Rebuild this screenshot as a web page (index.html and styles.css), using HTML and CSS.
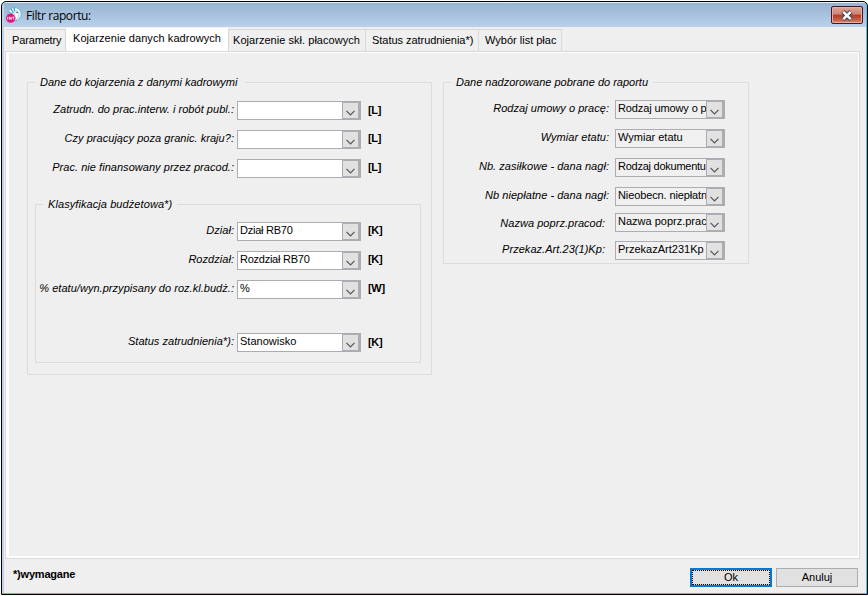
FILE: index.html
```html
<!DOCTYPE html>
<html lang="pl">
<head>
  <meta charset="utf-8">
  <title>Filtr raportu</title>
  <link rel="stylesheet" href="styles.css">
</head>
<body>
  <svg class="defs">
    <symbol id="chevron" viewBox="0 0 9 6">
      <path d="M0.5 0.8 L4.5 4.8 L8.5 0.8" fill="none" stroke="#555" stroke-width="1.2"/>
    </symbol>
  </svg>
  <div class="window">
    <div class="titlebar">
      <svg class="app-icon" viewBox="0 0 16 16">
        <circle cx="8.6" cy="7.2" r="6.7" fill="#f2fafd" stroke="#5fb9d8" stroke-width="1"/>
        <path d="M5 2 L7.5 6 M2.8 5 L6 7 M8 1 L8.6 4" stroke="#3aa3cc" stroke-width="1.3"/>
        <path d="M9 4 Q13 3 13 8 Q12 12 10 13 Q8 9 9 4" fill="#fff" stroke="#8fb4c4" stroke-width=".6"/>
        <circle cx="11" cy="5.5" r=".8" fill="#345"/>
        <circle cx="4.7" cy="11.2" r="4.6" fill="#e5127d"/>
        <path d="M1.7 9.8 V12.6 M3.4 12.6 V9.8 L5.2 12.6 V9.8 M6.2 10.2 H8.6 M7.4 10.2 V12.6" fill="none" stroke="#fff" stroke-width=".8"/>
      </svg>
      <span class="title">Filtr raportu:</span>
      <button class="close">
        <svg viewBox="0 0 14 11" width="14" height="11">
          <path d="M3 1.5 L11 9.5 M11 1.5 L3 9.5" stroke="#4b4a5c" stroke-width="4.6"/>
          <path d="M3.3 1.8 L10.7 9.2 M10.7 1.8 L3.3 9.2" stroke="#fff" stroke-width="2.4"/>
        </svg>
      </button>
    </div>

    <div class="tabs">
      <div class="tab t1"><span>Parametry</span></div>
      <div class="tab t2 active"><span>Kojarzenie danych kadrowych</span></div>
      <div class="tab t3"><span>Kojarzenie skł. płacowych</span></div>
      <div class="tab t4"><span>Status zatrudnienia*)</span></div>
      <div class="tab t5"><span>Wybór list płac</span></div>
    </div>

    <div class="panel">
      <fieldset class="group hr-data">
        <legend>Dane do kojarzenia z danymi kadrowymi</legend>
        <div class="row first"><label>Zatrudn. do prac.interw. i robót publ.:</label><div class="combo"><span></span><i><svg><use href="#chevron"/></svg></i></div><b>[L]</b></div>
        <div class="row"><label>Czy pracujący poza granic. kraju?:</label><div class="combo"><span></span><i><svg><use href="#chevron"/></svg></i></div><b>[L]</b></div>
        <div class="row"><label>Prac. nie finansowany przez pracod.:</label><div class="combo"><span></span><i><svg><use href="#chevron"/></svg></i></div><b>[L]</b></div>

        <fieldset class="group budget">
          <legend>Klasyfikacja budżetowa*)</legend>
          <div class="row"><label>Dział:</label><div class="combo"><span class="tight">Dział RB70</span><i><svg><use href="#chevron"/></svg></i></div><b>[K]</b></div>
          <div class="row"><label>Rozdział:</label><div class="combo"><span class="tight">Rozdział RB70</span><i><svg><use href="#chevron"/></svg></i></div><b>[K]</b></div>
          <div class="row"><label>% etatu/wyn.przypisany do roz.kl.budż.:</label><div class="combo"><span>%</span><i><svg><use href="#chevron"/></svg></i></div><b>[W]</b></div>
          <div class="row status"><label>Status zatrudnienia*):</label><div class="combo"><span>Stanowisko</span><i><svg><use href="#chevron"/></svg></i></div><b>[K]</b></div>
        </fieldset>
      </fieldset>

      <fieldset class="group report-data">
        <legend>Dane nadzorowane pobrane do raportu</legend>
        <div class="row"><label>Rodzaj umowy o pracę:</label><div class="combo"><span class="snug">Rodzaj umowy o p</span><i><svg><use href="#chevron"/></svg></i></div></div>
        <div class="row"><label>Wymiar etatu:</label><div class="combo"><span>Wymiar etatu</span><i><svg><use href="#chevron"/></svg></i></div></div>
        <div class="row"><label>Nb. zasiłkowe - dana nagł:</label><div class="combo"><span class="tight">Rodzaj dokumentu</span><i><svg><use href="#chevron"/></svg></i></div></div>
        <div class="row"><label>Nb niepłatne - dana nagł:</label><div class="combo"><span class="snug">Nieobecn. niepłatn</span><i><svg><use href="#chevron"/></svg></i></div></div>
        <div class="row prev"><label>Nazwa poprz.pracod:</label><div class="combo"><span>Nazwa poprz.prac</span><i><svg><use href="#chevron"/></svg></i></div></div>
        <div class="row art"><label>Przekaz.Art.23(1)Kp:</label><div class="combo"><span>PrzekazArt231Kp</span><i><svg><use href="#chevron"/></svg></i></div></div>
      </fieldset>
    </div>

    <div class="footer">
      <span class="required">*)wymagane</span>
      <button class="btn primary"><span>Ok</span></button>
      <button class="btn">Anuluj</button>
    </div>
  </div>
</body>
</html>
```
FILE: styles.css
```css
* {
  box-sizing: border-box;
}

body {
  margin: 0;
  padding: 1px 0 1px 1px;
  height: 596px;
  overflow: hidden;
  background: #fff;
  color: #000;
  font-family: "Liberation Sans", Arial, sans-serif;
  font-size: 11px;
  line-height: 14px;
}

.defs {
  display: none;
}

.window {
  display: flex;
  flex-direction: column;
  width: 867px;
  height: 594px;
  padding: 1px 1px 1px 2px;
  border: 1px solid #000;
  border-radius: 5px 5px 0 0;
  background: #efefef;
  box-shadow: inset -1px -1px #3cc5ee, inset 2px 0 #bcd3ea, inset 0 1px #e8f1fa;
}

.titlebar {
  display: flex;
  align-items: center;
  height: 24px;
  padding: 0 3px 0 2px;
  background: linear-gradient(#98b4d2, #b9d1ea);
}

.app-icon {
  width: 16px;
  height: 16px;
}

.title {
  flex: 1;
  margin: 2px 0 0 4px;
  font: 12px/16px "Open Sans", "Noto Sans", sans-serif;
  letter-spacing: -0.4px;
}

.close {
  display: flex;
  align-items: center;
  justify-content: center;
  width: 32px;
  height: 18px;
  padding: 0;
  border: 1px solid #431620;
  border-radius: 2px;
  background: linear-gradient(#dfa597, #cf8575 45%, #b63a22 50%, #c1583f 75%, #d58d78);
  box-shadow: inset 0 0 0 1px #e2b0a4;
}

.tabs {
  display: flex;
  align-items: flex-end;
  height: 24px;
  padding-left: 2px;
}

.tab {
  height: 22px;
  border-top: 1px solid #d9d9d9;
  border-right: 1px solid #d9d9d9;
  padding: 3px 0 0 5px;
  white-space: nowrap;
}

.tab.t1 {
  width: 60px;
  padding-left: 6px;
  letter-spacing: -0.15px;
}

.tab.t2 {
  width: 163px;
  letter-spacing: 0.07px;
}

.tab.t3 {
  width: 137px;
  padding-left: 4px;
  letter-spacing: 0.04px;
}

.tab.t4 {
  width: 113px;
  padding-left: 6px;
  letter-spacing: -0.04px;
}

.tab.t5 {
  width: 83px;
  padding-left: 6px;
}

.tab.active {
  height: 24px;
  margin-bottom: -1px;
  padding: 2px 0 0 7px;
  border-color: #fff #d9d9d9 #fff #fff;
  background: #fff;
}

.panel {
  display: flex;
  align-items: flex-start;
  gap: 11px;
  width: 855px;
  height: 508px;
  margin-left: 1px;
  padding: 23px 0 0 21px;
  border: 1px solid #d9d9d9;
  box-shadow: inset 3px 1px #fff, inset -1px -2px #fff;
}

.group {
  margin: 0;
  padding: 0;
  border: 1px solid #dcdcdc;
  min-width: 0;
}

legend {
  height: 14px;
  margin-left: 7px;
  padding: 0 5px;
  font-style: italic;
  white-space: nowrap;
}

.hr-data {
  width: 405px;
  height: 300px;
}

.hr-data > legend {
  padding-right: 8px;
}

.budget {
  width: 386px;
  height: 166px;
  margin: 19px 0 0 7px;
}

.budget > legend {
  padding-right: 5px;
  letter-spacing: 0.08px;
}

.report-data {
  width: 306px;
  height: 189px;
}

.row {
  display: flex;
  height: 19px;
  margin-bottom: 10px;
}

.hr-data .row:first-of-type {
  margin-top: 12px;
}

.hr-data .budget .row:first-of-type,
.report-data .row:first-of-type {
  margin-top: 11px;
}

.row label {
  width: 206px;
  margin: 1px 3px 0 0;
  font-style: italic;
  letter-spacing: 0.04px;
  text-align: right;
  white-space: nowrap;
}

.budget .row label {
  width: 198px;
}

.combo {
  display: flex;
  width: 124px;
  height: 19px;
  border: 1px solid #abadb3;
  background: #fff;
}

.combo span {
  flex: 1;
  min-width: 0;
  padding-left: 2px;
  overflow: hidden;
  white-space: nowrap;
}

.combo .tight {
  letter-spacing: -0.25px;
}

.combo .snug {
  letter-spacing: -0.12px;
}

.combo i {
  display: flex;
  align-items: center;
  justify-content: center;
  width: 18px;
  height: 17px;
  padding-top: 4px;
  border: 1px solid #abadb3;
  border-right-width: 2px;
  background: #e1e1e1;
}

.combo svg {
  width: 9px;
  height: 6px;
}

.row b {
  margin: 1px 0 0 7px;
  letter-spacing: -0.3px;
}

.row.first b,
.row.status b {
  margin-top: 2px;
}

.row.status {
  margin-top: 34px;
}

.report-data .row label {
  width: 165px;
  margin-right: 6px;
}

.report-data .combo {
  width: 110px;
  background: #f0f0f0;
}

.report-data .row.prev {
  margin: -3px 0 9px;
}

.report-data .prev label,
.report-data .art label {
  width: 161px;
  margin-right: 10px;
}

.report-data .prev label {
  margin-top: 3px;
}

.footer {
  display: flex;
  height: 33px;
  padding: 9px 8px 0 9px;
}

.required {
  flex: 1;
  margin-top: -1px;
  font-weight: bold;
  letter-spacing: -0.2px;
}

.btn {
  width: 82px;
  height: 19px;
  margin-left: 4px;
  padding: 0 0 2px;
  border: 1px solid #adadad;
  background: #e1e1e1;
  color: #000;
  font: 11px/14px "Liberation Sans", Arial, sans-serif;
}

.btn.primary {
  padding: 0;
  border: 2px solid #0078d7;
}

.btn.primary span {
  display: block;
  height: 15px;
  border: 1px dotted #000;
  line-height: 13px;
}
```
